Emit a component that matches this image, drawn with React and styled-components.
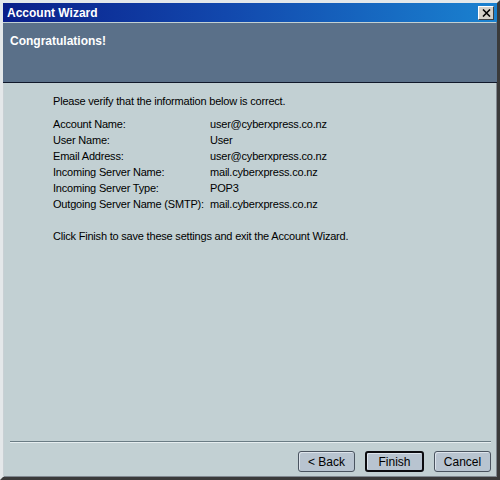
import React from 'react';
import styled, {createGlobalStyle} from "styled-components";

const Global = createGlobalStyle`
    html, body {
        margin: 0;
        padding: 0;
        background: #c2d0d3;
    }
    body {
        font-family: "Liberation Sans", Arial, sans-serif;
        font-size: 11px;
    }
`

const Window = styled.div`
    width: 500px;
    height: 480px;
    box-sizing: border-box;
    display: flex;
    flex-direction: column;
    background: #c2d0d3;
    border-style: solid;
    border-width: 3px;
    border-color: #e4e8ea #3a3a3a #3a3a3a #e4e8ea;
    box-shadow: inset 1px 1px 0 #c8d0d4, inset -1px -1px 0 #808890;
`

const TitleBar = styled.div`
    height: 19px;
    display: flex;
    align-items: center;
    justify-content: space-between;
    padding: 0 3px 0 4px;
    background: linear-gradient(to right, #0a1f8a 0%, #1248ad 45%, #1a82d0 100%);
    color: #fff;
    font-weight: bold;
    font-size: 12px;
    margin-bottom: 1px;
`

const CloseButton = styled.div`
    width: 16px;
    height: 14px;
    box-sizing: border-box;
    background: #d4d0c8;
    border-style: solid;
    border-width: 1px;
    border-color: #fff #404040 #404040 #fff;
    display: flex;
    align-items: center;
    justify-content: center;
`

const Header = styled.div`
    height: 60px;
    box-sizing: border-box;
    background: #5a7089;
    border-bottom: 1px solid #10182a;
    padding: 11px 7px 0;
    color: #fff;
    font-weight: bold;
    font-size: 12px;
`

const Body = styled.div`
    flex: 1;
    padding: 10px 0 0 50px;
    color: #000;
    line-height: 16px;
    letter-spacing: -0.2px;
`

const Intro = styled.p`
    margin: 0 0 7px;
`

const Info = styled.div`
    display: grid;
    grid-template-columns: 157px auto;
    white-space: nowrap;
`

const Outro = styled.p`
    margin: 16px 0 0;
`

const Footer = styled.div`
    padding: 0 6px 5px 7px;
`

const Separator = styled.div`
    height: 0;
    border-top: 1px solid #6a7c84;
    border-bottom: 1px solid #e6eef0;
    margin: 0 0 8px 0;
`

const Buttons = styled.div`
    display: flex;
    justify-content: flex-end;
    gap: 10px;
`

const Button = styled.button`
    width: ${p => p.$w || 57}px;
    height: 21px;
    font-family: inherit;
    font-size: 12px;
    color: #000;
    background: #b8c4d0;
    border: ${p => p.$default ? '2px solid #0c0c10' : '1px solid #4a5460'};
    border-radius: 3px;
    box-shadow: inset 1px 1px 0 #dde4ec;
    padding: 0;
`

const rows = [
    ['Account Name:', 'user@cyberxpress.co.nz'],
    ['User Name:', 'User'],
    ['Email Address:', 'user@cyberxpress.co.nz'],
    ['Incoming Server Name:', 'mail.cyberxpress.co.nz'],
    ['Incoming Server Type:', 'POP3'],
    ['Outgoing Server Name (SMTP):', 'mail.cyberxpress.co.nz'],
];

const App = () => {
    return (
        <Window>
            <Global/>
            <TitleBar>
                <span>Account Wizard</span>
                <CloseButton>
                    <svg width="9" height="8" viewBox="0 0 9 8">
                        <path d="M1 0.5 L8 7.5 M8 0.5 L1 7.5" stroke="#000" strokeWidth="1.6"/>
                    </svg>
                </CloseButton>
            </TitleBar>
            <Header>Congratulations!</Header>
            <Body>
                <Intro>Please verify that the information below is correct.</Intro>
                <Info>
                    {rows.map(([k, v]) => (
                        <React.Fragment key={k}>
                            <span>{k}</span>
                            <span>{v}</span>
                        </React.Fragment>
                    ))}
                </Info>
                <Outro>Click Finish to save these settings and exit the Account Wizard.</Outro>
            </Body>
            <Footer>
                <Separator/>
                <Buttons>
                    <Button>&lt; Back</Button>
                    <Button $default $w={59}>Finish</Button>
                    <Button>Cancel</Button>
                </Buttons>
            </Footer>
        </Window>
    );
};

export default App;
